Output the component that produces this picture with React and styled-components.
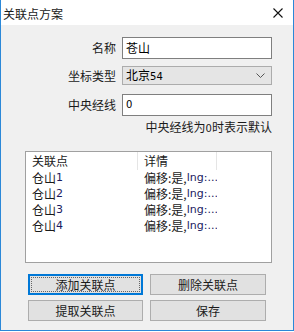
import React from "react";
import styled, { createGlobalStyle } from "styled-components";

const Global = createGlobalStyle`
  html, body { margin: 0; padding: 0; background: #ffffff; }
  body { font-family: "Noto Sans CJK SC", "Microsoft YaHei", sans-serif; font-size: 12px; color: #000; }
  * { box-sizing: border-box; }
`;

const Window = styled.div`
  width: 294px;
  height: 331px;
  display: flex;
  flex-direction: column;
  background: #f0f0f0;
  border: 1px solid #2b88d8;
  border-top: none;
`;

const TitleBar = styled.div`
  height: 25px;
  flex: none;
  background: #ffffff;
  display: flex;
  align-items: center;
  justify-content: space-between;
  padding: 0 10px 0 2px;
`;

const Title = styled.span`
  font-size: 12px;
  line-height: 14px;
  margin-top: 2px;
  color: #1a1a1a;
`;

const CloseIcon = styled.svg`
  width: 10px;
  height: 10px;
  margin-top: 1px;
`;

const Body = styled.div`
  flex: 1;
  display: flex;
  flex-direction: column;
  padding-top: 12px;
`;

const FormGrid = styled.div`
  display: grid;
  grid-template-columns: 115px 150px;
  column-gap: 6px;
  align-items: center;
`;

const Label = styled.label`
  text-align: right;
  font-size: 12px;
  line-height: 14px;
  color: #1a1a1a;
  margin-top: ${(p) => p.$mt || 0}px;
`;

const TextBox = styled.div`
  height: 22px;
  background: #fff;
  border: 1px solid #7f7f7f;
  display: flex;
  align-items: center;
  padding-left: 3px;
  font-size: 12px;
  line-height: 14px;
  margin-top: ${(p) => p.$mt || 0}px;
  ${(p) => p.$top && `align-items: flex-start; padding-top: 3px;`}
`;

const Select = styled.div`
  height: 19px;
  background: #e5e5e5;
  border: 1px solid #acacac;
  display: flex;
  align-items: center;
  justify-content: space-between;
  padding: 0 6px 0 3px;
  font-size: 12px;
  line-height: 14px;
  margin-top: ${(p) => p.$mt || 0}px;
`;

const Small = styled.span`
  font-family: "DejaVu Sans", "Liberation Sans", sans-serif;
  font-size: 10px;
`;

const Hint = styled.div`
  margin-top: 3px;
  width: 271px;
  text-align: right;
  font-size: 12px;
  line-height: 16px;
  color: #1a1a1a;
`;

const ListView = styled.div`
  margin: 14px 0 0 24px;
  width: 247px;
  height: 112px;
  background: #fff;
  border: 1px solid #a0a0a0;
  display: flex;
  flex-direction: column;
`;

const ListRow = styled.div`
  display: grid;
  grid-template-columns: 112px 79px;
  height: ${(p) => (p.$header ? 18 : 16)}px;
  align-items: center;
`;

const Cell = styled.div`
  height: 100%;
  display: flex;
  align-items: center;
  padding-left: 6px;
  font-size: 12px;
  line-height: 14px;
  white-space: nowrap;
  overflow: hidden;
  color: #1a1a1a;
  border-right: ${(p) => (p.$sep ? "1px solid #e5e5e5" : "none")};
`;

const Latin = styled.span`
  font-family: "DejaVu Sans", "Liberation Sans", sans-serif;
  font-size: 11px;
  color: ${(p) => p.$c || "#000"};
`;

const ButtonGrid = styled.div`
  margin: 11px 0 0 27px;
  display: grid;
  grid-template-columns: 115px 116px;
  column-gap: 7px;
  row-gap: 5px;
`;

const Button = styled.div`
  position: relative;
  height: 21px;
  background: #e1e1e1;
  border: ${(p) => (p.$focused ? "2px solid #0078d7" : "1px solid #adadad")};
  display: flex;
  align-items: center;
  justify-content: center;
  font-size: 12px;
  line-height: 14px;
  color: #1a1a1a;
  ${(p) =>
    p.$focused &&
    `&::after { content: ""; position: absolute; inset: 1px; border: 1px dotted #666; }`}
`;

const rows = ["仓山1", "仓山2", "仓山3", "仓山4"];

export default function App() {
  return (
    <>
      <Global />
      <Window>
        <TitleBar>
          <Title>关联点方案</Title>
          <CloseIcon viewBox="0 0 10 10">
            <path d="M0.5 0.5 L9.5 9.5 M9.5 0.5 L0.5 9.5" stroke="#111" strokeWidth="1.1" fill="none" />
          </CloseIcon>
        </TitleBar>
        <Body>
          <FormGrid>
            <Label>名称</Label>
            <TextBox>苍山</TextBox>
            <Label $mt={7}>坐标类型</Label>
            <Select $mt={7}>
              <span>
                北京<Small>54</Small>
              </span>
              <svg width="9" height="5" viewBox="0 0 9 5">
                <path d="M0.5 0.5 L4.5 4.5 L8.5 0.5" stroke="#555" strokeWidth="1" fill="none" />
              </svg>
            </Select>
            <Label $mt={9}>中央经线</Label>
            <TextBox $mt={9} $top>
              <Small>0</Small>
            </TextBox>
          </FormGrid>
          <Hint>
            中央经线为<Small>0</Small>时表示默认
          </Hint>
          <ListView>
            <ListRow $header>
              <Cell $sep>关联点</Cell>
              <Cell $sep>详情</Cell>
            </ListRow>
            {rows.map((r) => (
              <ListRow key={r}>
                <Cell>
                  仓山<Latin $c="#1a1a60">{r.slice(2)}</Latin>
                </Cell>
                <Cell>
                  偏移:是,<Latin $c="#1a1a60">lng:...</Latin>
                </Cell>
              </ListRow>
            ))}
          </ListView>
          <ButtonGrid>
            <Button $focused>添加关联点</Button>
            <Button>删除关联点</Button>
            <Button>提取关联点</Button>
            <Button>保存</Button>
          </ButtonGrid>
        </Body>
      </Window>
    </>
  );
}
